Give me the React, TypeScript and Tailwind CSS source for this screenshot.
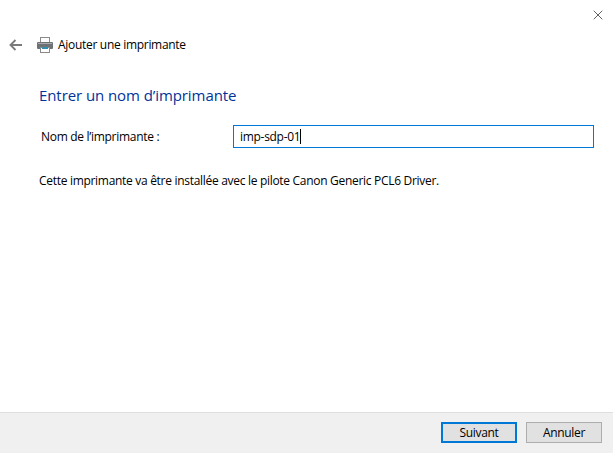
import { X } from "lucide-react";

function BackArrow() {
  return (
    <svg width="13" height="12" viewBox="0 0 13 12" fill="none" stroke="#7a7a7a" strokeWidth="1.8">
      <path d="M13 6H1.5M6.5 1L1.5 6l5 5" />
    </svg>
  );
}

function PrinterIcon() {
  return (
    <svg width="16" height="16" viewBox="0 0 16 16">
      <rect x="3.5" y="0.5" width="9" height="5" fill="#fff" stroke="#8a8a8a" />
      <rect x="0" y="5" width="16" height="7" rx="1" fill="#6f7274" />
      <rect x="1" y="6" width="14" height="1" fill="#a9abad" />
      <rect x="3.5" y="10.5" width="9" height="5" fill="#fff" stroke="#8a8a8a" />
      <rect x="5" y="10" width="6" height="2" fill="#2f8fb0" />
    </svg>
  );
}

export default function App() {
  return (
    <div className="w-[613px] h-[453px] bg-white flex flex-col font-['Open_Sans',sans-serif] text-[12px] tracking-[-0.3px] text-black overflow-hidden">
      <div className="flex justify-end h-[28px] pt-[7px] pr-[7px]">
        <X size={16} strokeWidth={1} color="#111" />
      </div>

      <div className="flex items-center h-[34px] pl-[9px]">
        <BackArrow />
        <div className="ml-[15px]">
          <PrinterIcon />
        </div>
        <span className="ml-[5px]">Ajouter une imprimante</span>
      </div>

      <div className="flex-1 pl-[39px] pr-[19px] pt-[23px]">
        <h1 className="text-[15px] leading-[20px] tracking-[-0.08px] text-[#003399] font-normal">Entrer un nom d’imprimante</h1>

        <div className="flex items-center mt-[20px]">
          <label className="w-[194px] pl-[2px]">Nom de l’imprimante :</label>
          <div className="flex items-center w-[361px] h-[23px] border border-[#0078d7] pl-[6px]">
            <span>imp-sdp-01</span>
            <span className="w-px h-[15px] bg-black" />
          </div>
        </div>

        <p className="mt-[24px]">Cette imprimante va être installée avec le pilote Canon Generic PCL6 Driver.</p>
      </div>

      <div className="flex justify-end items-start gap-[9px] h-[41px] bg-[#f0f0f0] border-t border-[#dfdfdf] pt-[9px] pr-[11px]">
        <button className="w-[76px] h-[21px] bg-[#e1e1e1] border-2 border-[#0078d7] leading-none">Suivant</button>
        <button className="w-[76px] h-[21px] bg-[#e1e1e1] border border-[#adadad] leading-none">Annuler</button>
      </div>
    </div>
  );
}
